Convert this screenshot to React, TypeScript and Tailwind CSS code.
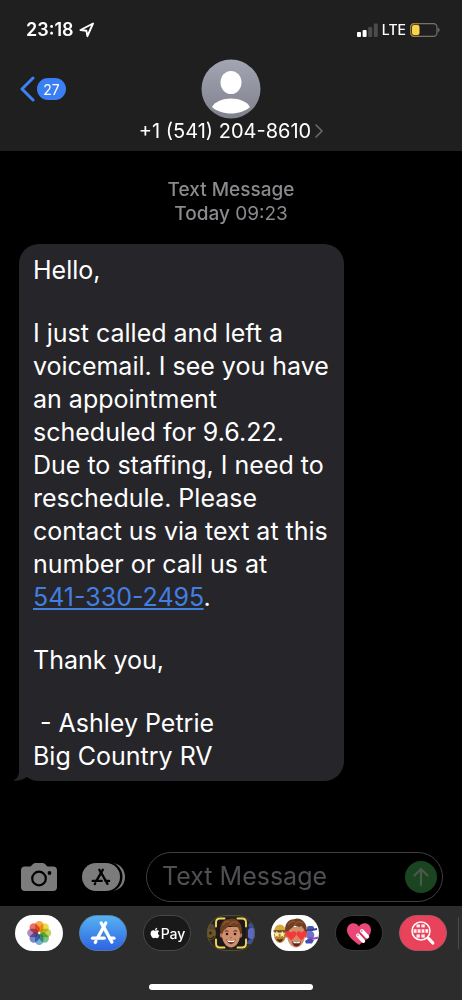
import React from 'react';
import { FaApple } from 'react-icons/fa';

const LocationArrow = () => (
  <svg className="w-4 h-4" viewBox="0 0 16 16" fill="none" stroke="#fff" strokeWidth="1.9" strokeLinejoin="round">
    <path d="M15 1.5 L2.5 8 L8.4 8.8 L9.4 14.2 Z" />
  </svg>
);

const SignalBars = () => (
  <svg className="w-[21px] h-[14px]" viewBox="0 0 21 14">
    <rect x="0" y="9" width="4" height="5" rx="1" fill="#fff" />
    <rect x="5.6" y="7" width="4" height="7" rx="1" fill="#fff" />
    <rect x="11.2" y="4" width="4" height="10" rx="1" fill="#4b4b4b" />
    <rect x="16.8" y="0.5" width="4" height="13.5" rx="1" fill="#4b4b4b" />
  </svg>
);

const Battery = () => (
  <svg className="w-[30px] h-[14px]" viewBox="0 0 30 14">
    <rect x="0.6" y="0.6" width="26.4" height="12.8" rx="3.6" fill="none" stroke="#77736a" strokeWidth="1.2" />
    <path d="M9 0.6 H4.2 A3.6 3.6 0 0 0 0.6 4.2 V9.8 A3.6 3.6 0 0 0 4.2 13.4 H9" fill="none" stroke="#9a8133" strokeWidth="1.2" />
    <rect x="2" y="2" width="7.5" height="10" rx="2" fill="#fcd34a" />
    <path d="M28.2 4.8 Q29.6 5.4 29.6 7 T28.2 9.2 Z" fill="#77736a" />
  </svg>
);

const Avatar = () => (
  <svg className="w-[60px] h-[60px]" viewBox="0 0 60 60">
    <defs>
      <linearGradient id="avatarFill" x1="0" y1="0" x2="0" y2="1">
        <stop offset="0" stopColor="#a3a6b2" />
        <stop offset="1" stopColor="#7f818d" />
      </linearGradient>
    </defs>
    <circle cx="30" cy="30" r="29.5" fill="url(#avatarFill)" />
    <ellipse cx="30" cy="23.5" rx="10.5" ry="11.5" fill="#fff" />
    <path d="M11 48 C14 42.5 22 39.5 30 39.5 C38 39.5 46 42.5 49 48 C45 52 37 54.5 30 54.5 C23 54.5 15 52 11 48 Z" fill="#fff" />
  </svg>
);

const CameraIcon = () => (
  <svg className="w-9 h-7" viewBox="0 0 36 28">
    <path d="M4 3.5 H9.5 L12 1 Q13 0 14.5 0 H21.5 Q23 0 24 1 L26.5 3.5 H32 Q36 3.5 36 7.5 V24 Q36 28 32 28 H4 Q0 28 0 24 V7.5 Q0 3.5 4 3.5 Z" fill="#7c7c7c" />
    <circle cx="18" cy="15.5" r="6.8" fill="none" stroke="#000" strokeWidth="2.2" />
    <circle cx="28.5" cy="10" r="1.9" fill="#000" />
  </svg>
);

// The "A" made of three sticks, shared by both App Store buttons
const AppStoreMark = ({ color, width }: { color: string; width: number }) => (
  <g stroke={color} strokeWidth={width} strokeLinecap="round" fill="none">
    <path d="M10 1.5 L11.6 4.2" />
    <path d="M14.5 1.5 L6.5 15.5" />
    <path d="M12.2 5 L20.5 19.5" />
    <path d="M1.5 15.8 H13" />
    <path d="M18.3 15.8 H22.5" />
    <path d="M4.8 18.8 L4.2 19.8" />
  </g>
);

const AppDrawerIcon = () => (
  <svg className="w-11 h-7" viewBox="0 0 44 28">
    <path d="M31 0.3 C47 2 47 26 31 27.7 Z" fill="#7c7c7c" />
    <rect x="-1" y="-1.5" width="41.5" height="31" rx="15.5" fill="#000" />
    <rect x="0" y="0" width="38" height="28" rx="14" fill="#7c7c7c" />
    <g transform="translate(9.5 5.6) scale(0.78)">
      <AppStoreMark color="#000" width={3} />
    </g>
  </svg>
);

const petals = [
  { angle: 0, fill: '#f5972c' },
  { angle: 45, fill: '#ecd22a' },
  { angle: 90, fill: '#b4cc3e' },
  { angle: 135, fill: '#62b87a' },
  { angle: 180, fill: '#5da2cf' },
  { angle: 225, fill: '#6474be' },
  { angle: 270, fill: '#a974b4' },
  { angle: 315, fill: '#e6564e' },
];

const PhotosIcon = () => (
  <svg className="w-12 h-9" viewBox="0 0 48 36">
    <rect width="48" height="36" rx="18" fill="#fff" />
    {petals.map((petal) => (
      <rect
        key={petal.angle}
        x="20"
        y="6"
        width="8.4"
        height="11"
        rx="4.2"
        fill={petal.fill}
        fillOpacity="0.85"
        transform={`rotate(${petal.angle} 24.2 18)`}
        className="mix-blend-multiply"
      />
    ))}
  </svg>
);

const AppStoreIcon = () => (
  <svg className="w-12 h-9" viewBox="0 0 48 36">
    <defs>
      <linearGradient id="storeFill" x1="0" y1="0" x2="0" y2="1">
        <stop offset="0" stopColor="#56b3f2" />
        <stop offset="1" stopColor="#2e62e2" />
      </linearGradient>
    </defs>
    <rect x="0.5" y="0.5" width="47" height="35" rx="17.5" fill="url(#storeFill)" stroke="#5c86b4" strokeWidth="0.8" />
    <g transform="translate(12 6.4) scale(1.02 1.06)">
      <AppStoreMark color="#fff" width={3.2} />
    </g>
  </svg>
);

const Face = () => (
  <g>
    <ellipse cx="14.6" cy="20" rx="1.8" ry="2.8" fill="#b87454" />
    <ellipse cx="33.4" cy="20" rx="1.8" ry="2.8" fill="#b87454" />
    <path d="M15 12 H33 V20 C33 27 28.5 32.5 24 32.5 C19.5 32.5 15 27 15 20 Z" fill="#cf8f6c" />
    <path d="M13.6 18.5 C11.5 10 16 4 22 4.2 C28 1.5 36.5 7 34.6 18.5 L33 19 C33 15.5 31.5 13 29.5 11.5 C27 12.5 24.5 11.8 22.5 10.5 C20.5 13.5 17 13 15.4 19 Z" fill="#6f3f22" />
    <path d="M16 10 C18 6.5 21 6 23 7 M22.5 10.5 C24 7 27 5.5 31 8.5" fill="none" stroke="#94592f" strokeWidth="1.2" />
  </g>
);

const MemojiIcon = () => (
  <svg className="w-12 h-9" viewBox="0 0 48 36">
    <defs>
      <clipPath id="memojiClip">
        <rect width="48" height="36" rx="18" />
      </clipPath>
    </defs>
    <g clipPath="url(#memojiClip)">
      <rect width="48" height="36" fill="#292724" />
      <circle cx="1.5" cy="18" r="7.5" fill="#715626" />
      <path d="M0 10 Q5 6 8 12 L7 15 L0 14 Z" fill="#54483a" />
      <circle cx="3.5" cy="18" r="1.5" fill="#292724" />
      <path d="M1 23 Q5 25 7 21" stroke="#382716" strokeWidth="1.4" fill="none" />
      <rect x="41.5" y="8" width="6" height="5" rx="2" fill="#3a4a97" />
      <rect x="41" y="13" width="8" height="11" rx="3" fill="#5a69c6" />
      <path d="M40 27 Q43 22 48 25 V29 H40 Z" fill="#3d4fa3" />
      <rect x="9" y="3" width="30" height="30" rx="5" fill="#1b1a19" />
      <Face />
      <path d="M17.8 16.4 Q19.5 15.2 21.5 16.4 M26.5 16.4 Q28.5 15.2 30.2 16.4" stroke="#5b301a" strokeWidth="1.1" fill="none" />
      <circle cx="20" cy="19" r="1.3" fill="#2c1b14" />
      <circle cx="28" cy="19" r="1.3" fill="#2c1b14" />
      <path d="M23 22.5 Q24 23.2 25 22.5" stroke="#a5603f" strokeWidth="1" fill="none" />
      <path d="M19.2 24.6 Q24 26.2 28.8 24.6 Q27 29.2 24 29.2 Q21 29.2 19.2 24.6 Z" fill="#7a3026" />
      <path d="M20 25 Q24 26.5 28 25 L27 27 H21 Z" fill="#fff" />
      <path d="M17.5 3.5 H13 Q9 3.5 9 7.5 V11.5 M30.5 3.5 H35 Q39 3.5 39 7.5 V11.5 M9 24.5 V28.5 Q9 32.5 13 32.5 H17.5 M39 24.5 V28.5 Q39 32.5 35 32.5 H30.5" stroke="#f1d65a" strokeWidth="1.9" fill="none" strokeLinecap="round" />
    </g>
    <rect x="0.5" y="0.5" width="47" height="35" rx="17.5" fill="none" stroke="#5c5433" strokeWidth="0.8" />
  </svg>
);

const StickersIcon = () => (
  <svg className="w-12 h-9" viewBox="0 0 48 36">
    <defs>
      <clipPath id="stickersClip">
        <rect width="48" height="36" rx="18" />
      </clipPath>
    </defs>
    <g clipPath="url(#stickersClip)">
      <rect width="48" height="36" fill="#fff" />
      <ellipse cx="9" cy="19.5" rx="6" ry="8.5" fill="#b57f30" />
      <path d="M3 16 Q4 9.5 9 9.5 Q14 10 15 16 Z" fill="#d8a838" />
      <path d="M2.5 16 H14" stroke="#54402c" strokeWidth="1.6" />
      <path d="M5.8 15.8 L6.9 18 L9.2 18.2 L7.5 19.8 L8 22 L5.8 20.9 L3.8 22 L4.2 19.8 L2.6 18.2 L4.9 18 Z" fill="#fae9a5" />
      <path d="M11.2 15.8 L12.2 18 L14.2 18.2 L12.8 19.8 L13.2 22 L11.2 20.9 L9.4 22 L9.8 19.8 L8.4 18.2 L10.3 18 Z" fill="#fae9a5" />
      <path d="M5.5 24 Q9 25 12 23.5 Q11 27 8.8 27 Q6.5 27 5.5 24 Z" fill="#4c2910" />
      <rect x="36" y="11" width="7" height="5" rx="2" fill="#4a57b9" />
      <path d="M34 16 L46 14" stroke="#33418f" strokeWidth="1.8" />
      <circle cx="39" cy="20" r="4.3" fill="#6d72cc" />
      <path d="M34 26 Q38 22 43 25 L41 28.5 H35 Z" fill="#4250ae" />
      <path d="M38 22.5 Q42 24.5 47 22.5" stroke="#8f48bd" strokeWidth="2" fill="none" />
      <g transform="translate(1 0)">
        <Face />
        <path d="M19.3 25.6 L14.5 20.8 C11.8 17 16.5 14.4 19 17.8 C21.6 14.4 26 17 23.8 20.8 Z" fill="#f5393b" />
        <path d="M29.3 25.6 L25 20.8 C22.8 17 27 14.4 29.3 17.8 C32 14.4 36.2 17 33.8 20.8 Z" fill="#f5393b" />
        <path d="M20 26.2 Q24.5 28 29 26.2 Q28 31.5 24.5 31.5 Q21 31.5 20 26.2 Z" fill="#6c211f" />
        <path d="M21 26.6 Q24.5 28 28.2 26.6 L27.5 28.3 H21.8 Z" fill="#fff" />
      </g>
    </g>
  </svg>
);

const HeartIcon = () => (
  <svg className="w-12 h-9" viewBox="0 0 48 36">
    <rect x="0.5" y="0.5" width="47" height="35" rx="17.5" fill="#000" stroke="#444" strokeWidth="0.8" />
    <path d="M24 30 C18 25.5 12 20.5 12 15.2 C12 8 20.5 6 24 11.5 C27.5 6 36 8 36 15.2 C36 20.5 30 25.5 24 30 Z" fill="#ea4778" />
    <path d="M27 16 L32.2 21.6" stroke="#fff" strokeWidth="4" strokeLinecap="round" />
    <path d="M23 20.4 L28.2 26" stroke="#fff" strokeWidth="4" strokeLinecap="round" />
    <path d="M24.5 17.8 L31.5 25" stroke="#c4305f" strokeWidth="1.1" />
    <circle cx="26.8" cy="15.9" r="1" fill="#e490ac" />
    <circle cx="22.9" cy="20.3" r="1" fill="#e490ac" />
  </svg>
);

const ImagesIcon = () => (
  <svg className="w-12 h-9" viewBox="0 0 48 36">
    <rect x="0.5" y="0.5" width="47" height="35" rx="17.5" fill="#e9425b" stroke="#b55c6b" strokeWidth="0.8" />
    <circle cx="22" cy="16" r="9" fill="#e9425b" stroke="#fff" strokeWidth="1.5" />
    <g fill="#fff" fillOpacity="0.9">
      <rect x="17.5" y="9.4" width="3.4" height="3" />
      <rect x="22.4" y="9.4" width="3.4" height="3" />
      <rect x="14.6" y="14.2" width="3" height="3.6" />
      <rect x="18.6" y="14.2" width="3" height="3.6" />
      <rect x="22.6" y="14.2" width="2.8" height="3.6" />
      <rect x="26.4" y="14.2" width="2.8" height="3.6" />
      <rect x="17.5" y="19.4" width="3.4" height="3.2" />
      <rect x="22.4" y="19.4" width="3.4" height="3.2" />
    </g>
    <path d="M28.5 22.5 L30 24" stroke="#fff" strokeWidth="1.6" />
    <path d="M29.8 23.6 L33.8 28" stroke="#fff" strokeWidth="3.2" strokeLinecap="round" />
  </svg>
);

const App: React.FC = () => {
  return (
    <div className="flex min-h-screen flex-col bg-black font-['Inter','Liberation_Sans',sans-serif] text-white">
      <header className="bg-[#1f1f1f] pb-2">
        <div className="flex h-[59px] items-center justify-between pl-[26px] pr-[22px]">
          <div className="flex items-center gap-1">
            <span className="text-[18px] font-semibold leading-6">23:18</span>
            <LocationArrow />
          </div>
          <div className="flex items-center gap-1">
            <SignalBars />
            <span className="text-[14px] font-medium leading-6">LTE</span>
            <Battery />
          </div>
        </div>
        <div className="grid grid-cols-[1fr_auto_1fr]">
          <button aria-label="Back" className="flex h-[60px] items-center gap-[2px] pl-5">
            <svg className="h-[26px] w-[15px]" viewBox="0 0 15 26" fill="none" stroke="#3b82f7" strokeWidth="3" strokeLinecap="round" strokeLinejoin="round">
              <path d="M13 2 L2 13 L13 24" />
            </svg>
            <span className="flex h-[22px] w-[29px] items-center justify-center rounded-full bg-[#3b7ff5] text-[14px]">27</span>
          </button>
          <button className="flex flex-col items-center">
            <Avatar />
            <span className="flex items-center gap-1 text-[20px] leading-6">
              +1 (541) 204-8610
              <svg className="h-[14px] w-2" viewBox="0 0 8 14" fill="none" stroke="#6b6b6e" strokeWidth="1.6" strokeLinecap="round" strokeLinejoin="round">
                <path d="M1 1 L7 7 L1 13" />
              </svg>
            </span>
          </button>
        </div>
      </header>

      <main className="flex-1 px-[19px] pb-6 pt-[27px]">
        <div className="text-center text-[19px] leading-6 text-[#8a8a8f]">
          <p className="font-medium">Text Message</p>
          <p><span className="font-medium">Today</span> 09:23</p>
        </div>

        <div className="relative mt-[18px] flex w-[325px] max-w-full flex-col gap-[30px] rounded-[20px] bg-[#26252a] px-[14px] pb-2 pt-[10px] text-[25px] leading-[33px]">
          <p>Hello,</p>
          <p>
            I just called and left a<br />
            voicemail. I see you have<br />
            an appointment<br />
            scheduled for 9.6.22.<br />
            Due to staffing, I need to<br />
            reschedule. Please<br />
            contact us via text at this<br />
            number or call us at<br />
            <a href="tel:541-330-2495" className="text-[#427fe0] underline decoration-2 underline-offset-2">541-330-2495</a>.
          </p>
          <p>Thank you,</p>
          <p className="whitespace-pre-wrap">
            {' - Ashley Petrie'}<br />
            Big Country RV
          </p>
          <svg className="absolute -left-[6px] bottom-0 h-6 w-6" viewBox="0 0 24 24">
            <path d="M6 0 V14 C6 19 4 22 0 23.5 C5 24 9.5 23 13 20.5 L20 16 V0 Z" fill="#26252a" />
          </svg>
        </div>
      </main>

      <footer>
        <div className="flex items-center pb-1 pl-[21px] pr-[19px]">
          <button aria-label="Camera"><CameraIcon /></button>
          <button aria-label="Apps" className="ml-[25px]"><AppDrawerIcon /></button>
          <div className="ml-5 flex h-[50px] min-w-0 flex-1 items-center rounded-full border border-[#3e3e40] pl-[15px] pr-[5px]">
            <input
              type="text"
              aria-label="Text Message"
              placeholder="Text Message"
              className="min-w-0 flex-1 bg-transparent text-[25px] outline-none placeholder:text-[#4f4f54]"
            />
            <button aria-label="Send" className="flex h-8 w-8 items-center justify-center rounded-full bg-[#1b4520]">
              <svg className="h-5 w-5" viewBox="0 0 20 20" fill="none" stroke="#4c574d" strokeWidth="2.2" strokeLinecap="round" strokeLinejoin="round">
                <path d="M10 18 V2 M3.5 8.5 L10 2 L16.5 8.5" />
              </svg>
            </button>
          </div>
        </div>

        <div className="bg-[#2c2c2c] pb-[10px] pt-[9px]">
          <div className="flex items-center gap-4 overflow-hidden pl-[15px] [&>button]:shrink-0">
            <button aria-label="Photos"><PhotosIcon /></button>
            <button aria-label="App Store"><AppStoreIcon /></button>
            <button className="flex h-9 w-12 items-center justify-center rounded-full border border-[#484848] bg-[#191919] text-[14px] font-medium">
              <FaApple className="h-3 w-3" />
              Pay
            </button>
            <button aria-label="Memoji"><MemojiIcon /></button>
            <button aria-label="Memoji Stickers"><StickersIcon /></button>
            <button aria-label="Digital Touch"><HeartIcon /></button>
            <button aria-label="Images"><ImagesIcon /></button>
            <div className="-ml-[5px] h-8 w-px shrink-0 bg-[#4a4a4a]" />
          </div>
          <div className="mx-auto mt-[33px] h-[6px] w-[164px] rounded-full bg-white" />
        </div>
      </footer>
    </div>
  );
};

export default App;
